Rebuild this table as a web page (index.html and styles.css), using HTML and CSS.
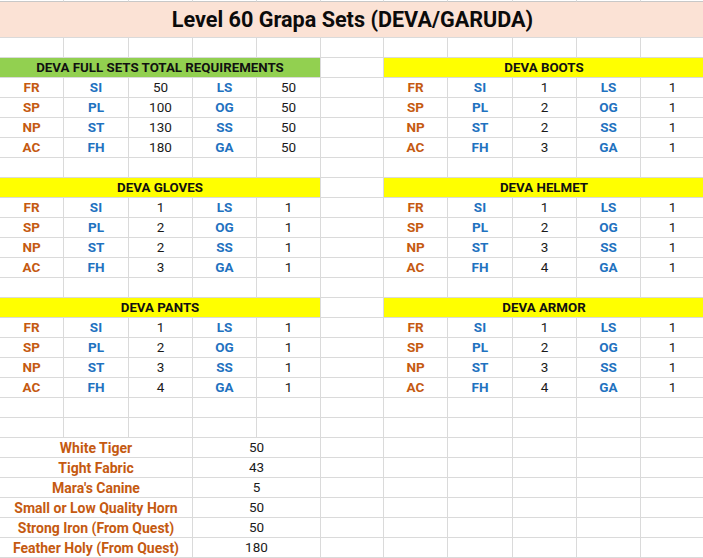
FILE: index.html
```html
<!DOCTYPE html>
<html>
<head>
<meta charset="utf-8">
<link rel="stylesheet" href="styles.css">
</head>
<body>
<div class="sheet">
  <div class="c sl"></div><div class="c sl"></div><div class="c sl"></div><div class="c sl"></div><div class="c sl"></div><div class="c sl"></div><div class="c sl"></div><div class="c sl"></div><div class="c sl"></div><div class="c sl"></div><div class="c sl"></div>
  <div class="c title span11">Level 60 Grapa Sets (DEVA/GARUDA)</div>

  <div class="c"></div><div class="c"></div><div class="c"></div><div class="c"></div><div class="c"></div><div class="c"></div><div class="c"></div><div class="c"></div><div class="c"></div><div class="c"></div><div class="c"></div>

  <div class="c hd green span5">DEVA FULL SETS TOTAL REQUIREMENTS</div><div class="c"></div><div class="c hd yellow span5">DEVA BOOTS</div>
  <div class="c o">FR</div><div class="c b">SI</div><div class="c n">50</div><div class="c b">LS</div><div class="c n">50</div><div class="c"></div><div class="c o">FR</div><div class="c b">SI</div><div class="c n">1</div><div class="c b">LS</div><div class="c n">1</div>
  <div class="c o">SP</div><div class="c b">PL</div><div class="c n">100</div><div class="c b">OG</div><div class="c n">50</div><div class="c"></div><div class="c o">SP</div><div class="c b">PL</div><div class="c n">2</div><div class="c b">OG</div><div class="c n">1</div>
  <div class="c o">NP</div><div class="c b">ST</div><div class="c n">130</div><div class="c b">SS</div><div class="c n">50</div><div class="c"></div><div class="c o">NP</div><div class="c b">ST</div><div class="c n">2</div><div class="c b">SS</div><div class="c n">1</div>
  <div class="c o">AC</div><div class="c b">FH</div><div class="c n">180</div><div class="c b">GA</div><div class="c n">50</div><div class="c"></div><div class="c o">AC</div><div class="c b">FH</div><div class="c n">3</div><div class="c b">GA</div><div class="c n">1</div>

  <div class="c"></div><div class="c"></div><div class="c"></div><div class="c"></div><div class="c"></div><div class="c"></div><div class="c"></div><div class="c"></div><div class="c"></div><div class="c"></div><div class="c"></div>

  <div class="c hd yellow span5">DEVA GLOVES</div><div class="c"></div><div class="c hd yellow span5">DEVA HELMET</div>
  <div class="c o">FR</div><div class="c b">SI</div><div class="c n">1</div><div class="c b">LS</div><div class="c n">1</div><div class="c"></div><div class="c o">FR</div><div class="c b">SI</div><div class="c n">1</div><div class="c b">LS</div><div class="c n">1</div>
  <div class="c o">SP</div><div class="c b">PL</div><div class="c n">2</div><div class="c b">OG</div><div class="c n">1</div><div class="c"></div><div class="c o">SP</div><div class="c b">PL</div><div class="c n">2</div><div class="c b">OG</div><div class="c n">1</div>
  <div class="c o">NP</div><div class="c b">ST</div><div class="c n">2</div><div class="c b">SS</div><div class="c n">1</div><div class="c"></div><div class="c o">NP</div><div class="c b">ST</div><div class="c n">3</div><div class="c b">SS</div><div class="c n">1</div>
  <div class="c o">AC</div><div class="c b">FH</div><div class="c n">3</div><div class="c b">GA</div><div class="c n">1</div><div class="c"></div><div class="c o">AC</div><div class="c b">FH</div><div class="c n">4</div><div class="c b">GA</div><div class="c n">1</div>

  <div class="c"></div><div class="c"></div><div class="c"></div><div class="c"></div><div class="c"></div><div class="c"></div><div class="c"></div><div class="c"></div><div class="c"></div><div class="c"></div><div class="c"></div>

  <div class="c hd yellow span5">DEVA PANTS</div><div class="c"></div><div class="c hd yellow span5">DEVA ARMOR</div>
  <div class="c o">FR</div><div class="c b">SI</div><div class="c n">1</div><div class="c b">LS</div><div class="c n">1</div><div class="c"></div><div class="c o">FR</div><div class="c b">SI</div><div class="c n">1</div><div class="c b">LS</div><div class="c n">1</div>
  <div class="c o">SP</div><div class="c b">PL</div><div class="c n">2</div><div class="c b">OG</div><div class="c n">1</div><div class="c"></div><div class="c o">SP</div><div class="c b">PL</div><div class="c n">2</div><div class="c b">OG</div><div class="c n">1</div>
  <div class="c o">NP</div><div class="c b">ST</div><div class="c n">3</div><div class="c b">SS</div><div class="c n">1</div><div class="c"></div><div class="c o">NP</div><div class="c b">ST</div><div class="c n">3</div><div class="c b">SS</div><div class="c n">1</div>
  <div class="c o">AC</div><div class="c b">FH</div><div class="c n">4</div><div class="c b">GA</div><div class="c n">1</div><div class="c"></div><div class="c o">AC</div><div class="c b">FH</div><div class="c n">4</div><div class="c b">GA</div><div class="c n">1</div>

  <div class="c"></div><div class="c"></div><div class="c"></div><div class="c"></div><div class="c"></div><div class="c"></div><div class="c"></div><div class="c"></div><div class="c"></div><div class="c"></div><div class="c"></div>
  <div class="c"></div><div class="c"></div><div class="c"></div><div class="c"></div><div class="c"></div><div class="c"></div><div class="c"></div><div class="c"></div><div class="c"></div><div class="c"></div><div class="c"></div>

  <div class="c o item span3">White Tiger</div><div class="c n span2">50</div><div class="c"></div><div class="c"></div><div class="c"></div><div class="c"></div><div class="c"></div><div class="c"></div>
  <div class="c o item span3">Tight Fabric</div><div class="c n span2">43</div><div class="c"></div><div class="c"></div><div class="c"></div><div class="c"></div><div class="c"></div><div class="c"></div>
  <div class="c o item span3">Mara's Canine</div><div class="c n span2">5</div><div class="c"></div><div class="c"></div><div class="c"></div><div class="c"></div><div class="c"></div><div class="c"></div>
  <div class="c o item span3">Small or Low Quality Horn</div><div class="c n span2">50</div><div class="c"></div><div class="c"></div><div class="c"></div><div class="c"></div><div class="c"></div><div class="c"></div>
  <div class="c o item span3">Strong Iron (From Quest)</div><div class="c n span2">50</div><div class="c"></div><div class="c"></div><div class="c"></div><div class="c"></div><div class="c"></div><div class="c"></div>
  <div class="c o item span3">Feather Holy (From Quest)</div><div class="c n span2">180</div><div class="c"></div><div class="c"></div><div class="c"></div><div class="c"></div><div class="c"></div><div class="c"></div>
</div>
</body>
</html>
```
FILE: styles.css
```css
html, body {
  margin: 0;
  padding: 0;
  background: #ffffff;
}
.sheet {
  display: grid;
  grid-template-columns: 64px 65px 64px 64px 64px 63px 64px 65px 64px 64px 64px;
  grid-template-rows: 2px 36px;
  grid-auto-rows: 20px;
  width: 706px;
  font-family: Roboto, "Liberation Sans", sans-serif;
  font-size: 13.5px;
  color: #111;
}
.c {
  box-sizing: border-box;
  border-right: 1px solid #dadada;
  border-bottom: 1px solid #dadada;
  display: flex;
  align-items: center;
  justify-content: center;
  white-space: nowrap;
  overflow: visible;
  line-height: 1;
}
.sl { border-bottom-color: #c8c8c8; }
.span11 { grid-column: span 11; }
.span5 { grid-column: span 5; }
.span3 { grid-column: span 3; }
.span2 { grid-column: span 2; }
.title {
  background: #fbe2d5;
  font-size: 21.6px;
  font-weight: 700;
  color: #0b0b0b;
  border-right: none;
}
.hd {
  font-weight: 700;
  color: #111;
  font-size: 13.3px;
}
.green { background: #92d050; }
.yellow { background: #ffff00; }
.o {
  color: #c55a11;
  font-weight: 700;
}
.item { font-size: 14px; }
.b {
  color: #1f72c0;
  font-weight: 700;
}
.n {
  font-weight: 400;
  color: #1a1a1a;
}
```
